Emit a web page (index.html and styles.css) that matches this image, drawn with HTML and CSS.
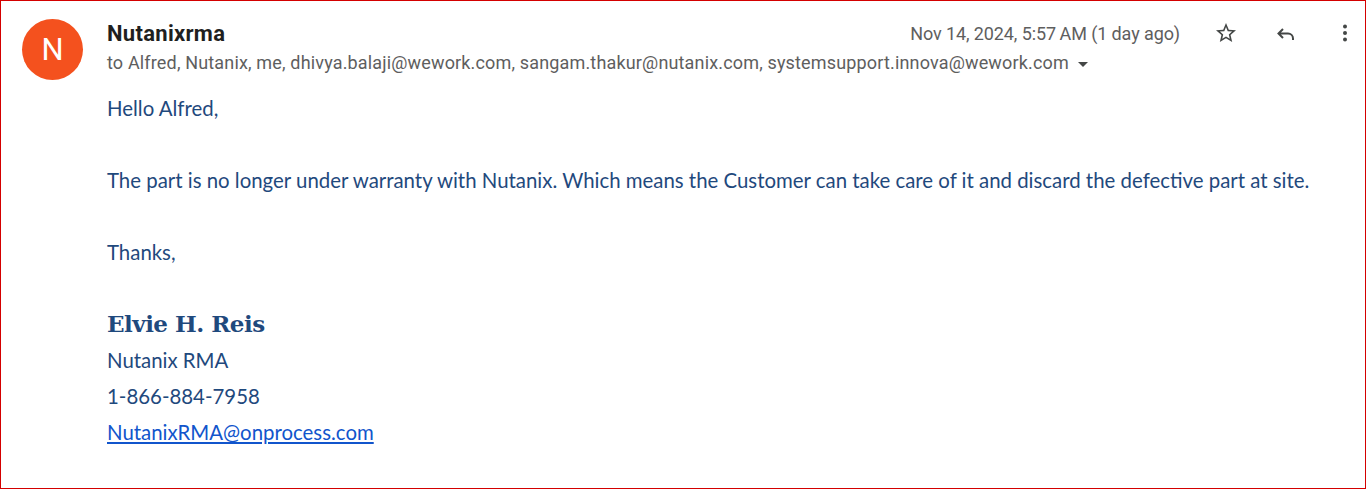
FILE: index.html
```html
<!DOCTYPE html>
<html>
<head>
<meta charset="utf-8">
<link rel="stylesheet" href="styles.css">
</head>
<body>
<div class="frame">
  <div class="msg">
    <div class="avatar">N</div>
    <div class="main">
      <div class="head">
        <div class="sender">Nutanixrma</div>
        <div class="meta">
          <span class="date">Nov 14, 2024, 5:57&#8201;AM (1 day ago)</span>
          <span class="icon star">
            <svg width="24" height="24" viewBox="0 0 24 24"><path fill="#444746" fill-rule="evenodd" d="M12 17.27 18.18 21l-1.64-7.03L22 9.24l-7.19-.61L12 2 9.19 8.63 2 9.24l5.46 4.73L5.82 21z M12 15.4l-3.76 2.27 1-4.28-3.32-2.88 4.38-.38L12 6.1l1.71 4.04 4.38.38-3.32 2.88 1 4.28z"/></svg>
          </span>
          <span class="icon reply">
            <svg width="24" height="24" viewBox="0 0 24 24"><path fill="none" stroke="#444746" stroke-width="2" d="M9 8 4.5 12.5 9 17 M5 12.5h9a5 5 0 0 1 5 5v1.5"/></svg>
          </span>
          <span class="icon more">
            <svg width="24" height="24" viewBox="0 0 24 24"><circle cx="12" cy="5.5" r="2" fill="#444746"/><circle cx="12" cy="12" r="2" fill="#444746"/><circle cx="12" cy="18.5" r="2" fill="#444746"/></svg>
          </span>
        </div>
      </div>
      <div class="to">to Alfred, Nutanix, me, dhivya.balaji@wework.com, sangam.thakur@nutanix.com, systemsupport.innova@wework.com <span class="caret"></span></div>
      <div class="body">
        <p>Hello Alfred,</p>
        <p>&nbsp;</p>
        <p>The part is no longer under warranty with Nutanix. Which means the Customer can take care of it and discard the defective part at site.</p>
        <p>&nbsp;</p>
        <p>Thanks,</p>
        <p>&nbsp;</p>
        <p class="sig-name">Elvie H. Reis</p>
        <p>Nutanix RMA</p>
        <p>1-866-884-7958</p>
        <p><a href="#">NutanixRMA@onprocess.com</a></p>
      </div>
    </div>
  </div>
</div>
</body>
</html>
```
FILE: styles.css
```css
html, body { margin: 0; padding: 0; background: #fff; }
.frame {
  width: 1364px;
  height: 487px;
  border: 1px solid #d40000;
  overflow: hidden;
}
.msg {
  display: flex;
  padding: 17px 0 0 21px;
}
.avatar {
  width: 61px;
  height: 61px;
  margin-top: 1px;
  border-radius: 50%;
  background: #f4511e;
  color: #fff;
  font-family: Roboto, "Noto Sans", sans-serif;
  font-size: 31px;
  display: flex;
  align-items: center;
  justify-content: center;
  flex: none;
}
.main { flex: 1; margin-left: 24px; }
.head {
  display: flex;
  justify-content: space-between;
  align-items: center;
  height: 30px;
}
.sender {
  font-family: Roboto, "Noto Sans", sans-serif;
  font-weight: 700;
  font-size: 22px;
  letter-spacing: 0.3px;
  color: #1f1f1f;
}
.to {
  font-family: Roboto, "Noto Sans", sans-serif;
  font-size: 18px;
  letter-spacing: 0.16px;
  color: #5e5e5e;
  line-height: 30px;
  white-space: nowrap;
}
.caret {
  display: inline-block;
  width: 0; height: 0;
  border-left: 5px solid transparent;
  border-right: 5px solid transparent;
  border-top: 5px solid #444746;
  margin-left: 4px;
  vertical-align: middle;
}
.meta {
  display: flex;
  align-items: center;
  margin-right: 8px;
  font-family: Roboto, "Noto Sans", sans-serif;
  font-size: 18px;
  color: #5e5e5e;
  white-space: nowrap;
}
.date { margin-right: 34px; letter-spacing: -0.1px; }
.icon { display: flex; width: 24px; height: 24px; }
.star { margin-right: 36px; }
.reply { margin-right: 35px; }
.body {
  margin-top: 12px;
  font-family: Lato, "Open Sans", sans-serif;
  font-size: 20.4px;
  color: #1f497d;
}
.body p { margin: 0; line-height: 36px; }
.sig-name {
  font-family: "DejaVu Serif", "Liberation Serif", serif;
  font-weight: 700;
  font-size: 23px;
  letter-spacing: -0.5px;
}
.body a { color: #1155cc; text-decoration: underline; }
```
